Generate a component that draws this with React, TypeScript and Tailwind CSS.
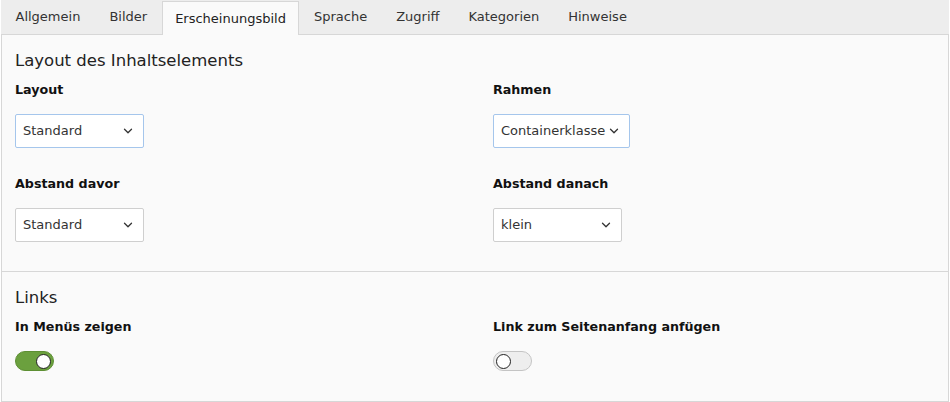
import { ChevronDown } from "lucide-react";

const tabs = ["Allgemein", "Bilder", "Erscheinungsbild", "Sprache", "Zugriff", "Kategorien", "Hinweise"];

function Select({ value, width, focus }: { value: string; width: string; focus?: boolean }) {
  return (
    <div
      className={`${width} h-[34px] flex items-center justify-between pl-[7px] pr-[8px] bg-white rounded-[2px] border ${
        focus ? "border-[#a5c6ec]" : "border-[#cfcfcf]"
      } text-[13px] text-[#333]`}
    >
      <span>{value}</span>
      <ChevronDown size={14} strokeWidth={2.2} className="text-[#333]" />
    </div>
  );
}

function Toggle({ on }: { on?: boolean }) {
  return (
    <div
      className={`w-[39px] h-[20px] rounded-full flex items-center px-[2px] border ${
        on ? "bg-[#6ba03e] border-[#5d8f33] justify-end" : "bg-[#eeeeee] border-[#c4c4c4] justify-start"
      }`}
    >
      <div className="w-[15px] h-[15px] rounded-full bg-white border-[1.5px] border-[#222]" />
    </div>
  );
}

function Field({ label, children }: { label: string; children: React.ReactNode }) {
  return (
    <div className="flex flex-col">
      <div className="font-bold text-[12.7px] leading-[16px] text-[#111]">{label}</div>
      <div className="mt-[16px]">{children}</div>
    </div>
  );
}

export default function App() {
  return (
    <div className="w-[950px] h-[402px] bg-white px-px font-['DejaVu_Sans',Verdana,sans-serif] text-[#333]">
      {/* Tab bar */}
      <div className="flex h-[35px] bg-[#ededed] border-b border-[#d7d7d7]">
        {tabs.map((t) =>
          t === "Erscheinungsbild" ? (
            <div
              key={t}
              className="mt-[1px] -mb-px px-[12.5px] flex items-center bg-[#fafafa] border-x border-t border-[#d7d7d7] text-[13px] text-[#222]"
            >
              {t}
            </div>
          ) : (
            <div key={t} className="px-[14.5px] flex items-center text-[13px] text-[#333]">
              {t}
            </div>
          )
        )}
      </div>

      <div className="bg-[#fafafa] border-x border-b border-[#d7d7d7] h-[367px]">
        {/* Layout section */}
        <div className="px-[13px] pt-[16px] pb-[29px] border-b border-[#d7d7d7]">
          <h2 className="text-[16.5px] leading-[20px] text-[#222]">Layout des Inhaltselements</h2>
          <div className="mt-[11px] grid grid-cols-[478px_1fr] gap-y-[28px]">
            <Field label="Layout">
              <Select value="Standard" width="w-[129px]" focus />
            </Field>
            <Field label="Rahmen">
              <Select value="Containerklasse" width="w-[137px]" focus />
            </Field>
            <Field label="Abstand davor">
              <Select value="Standard" width="w-[129px]" />
            </Field>
            <Field label="Abstand danach">
              <Select value="klein" width="w-[129px]" />
            </Field>
          </div>
        </div>

        {/* Links section */}
        <div className="px-[13px] pt-[16px]">
          <h2 className="text-[16.5px] leading-[20px] text-[#222]">Links</h2>
          <div className="mt-[11px] grid grid-cols-[478px_1fr]">
            <Field label="In Menüs zeigen">
              <Toggle on />
            </Field>
            <Field label="Link zum Seitenanfang anfügen">
              <Toggle />
            </Field>
          </div>
        </div>
      </div>
    </div>
  );
}
